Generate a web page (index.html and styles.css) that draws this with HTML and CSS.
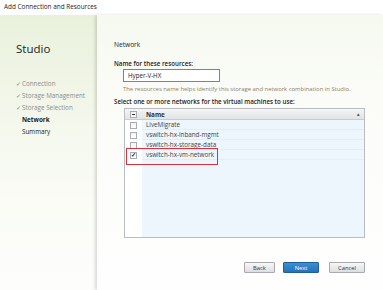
FILE: index.html
```html
<!DOCTYPE html>
<html lang="en">

<head>
    <meta charset="UTF-8">
    <meta name="viewport" content="width=device-width, initial-scale=1.0">
    <title>Add Connection and Resources</title>
    <link rel="stylesheet" href="styles.css">
</head>

<body>
    <div class="window">
        <div class="title-bar">Add Connection and Resources</div>

        <div class="wizard">
            <aside class="sidebar">
                <h1>Studio</h1>
                <ul class="steps">
                    <li class="done"><span class="tick">✓</span>Connection</li>
                    <li class="done"><span class="tick">✓</span>Storage Management</li>
                    <li class="done"><span class="tick">✓</span>Storage Selection</li>
                    <li class="current">Network</li>
                    <li>Summary</li>
                </ul>
            </aside>

            <main class="panel">
                <h2>Network</h2>

                <label class="field-label" for="res-name">Name for these resources:</label>
                <input class="text-input" type="text" id="res-name" value="Hyper-V-HX">
                <p class="hint">The resources name helps identify this storage and network combination in Studio.</p>

                <p class="field-label">Select one or more networks for the virtual machines to use:</p>

                <div class="net-table">
                    <div class="row head">
                        <div class="cell-check"><span class="box minus"></span></div>
                        <div class="cell-name">Name</div>
                        <span class="sort">&#9652;</span>
                    </div>
                    <div class="row">
                        <div class="cell-check"><span class="box"></span></div>
                        <div class="cell-name">LiveMigrate</div>
                    </div>
                    <div class="row">
                        <div class="cell-check"><span class="box"></span></div>
                        <div class="cell-name">vswitch-hx-inband-mgmt</div>
                    </div>
                    <div class="row">
                        <div class="cell-check"><span class="box"></span></div>
                        <div class="cell-name">vswitch-hx-storage-data</div>
                    </div>
                    <div class="row picked">
                        <div class="cell-check"><span class="box checked">✓</span></div>
                        <div class="cell-name">vswitch-hx-vm-network</div>
                        <div class="highlight"></div>
                    </div>
                    <div class="row filler">
                        <div class="cell-check"></div>
                        <div class="cell-name"></div>
                    </div>
                </div>

                <div class="buttons">
                    <button class="btn">Back</button>
                    <button class="btn primary">Next</button>
                    <button class="btn cancel">Cancel</button>
                </div>
            </main>
        </div>
    </div>
</body>

</html>
```

FILE: styles.css
```css
* {
    margin: 0;
    padding: 0;
    box-sizing: border-box;
}

body {
    font-family: 'Open Sans', 'Noto Sans', sans-serif;
    background-color: #ffffff;
    color: #333;
    width: 383px;
    height: 290px;
    overflow: hidden;
}

.window {
    display: flex;
    flex-direction: column;
    height: 290px;
}

.title-bar {
    height: 15px;
    padding: 2px 0 0 4px;
    font-size: 6.4px;
    line-height: 10px;
    color: #222;
    background-color: #ffffff;
}

.wizard {
    flex: 1;
    display: flex;
    background: linear-gradient(to bottom, #e9f1dc 0%, #f3f7eb 35%, #fafcf6 70%, #fdfdfc 100%);
}

.sidebar {
    width: 97px;
    padding: 26px 0 0 16px;
}

.sidebar h1 {
    font-size: 11.5px;
    font-weight: 400;
    line-height: 16px;
    color: #222;
    margin-bottom: 21px;
}

.steps {
    list-style: none;
}

.steps li {
    font-size: 6.3px;
    line-height: 12px;
    color: #222;
    padding-left: 6px;
}

.steps li.done {
    color: #8c8c8c;
    padding-left: 0;
}

.steps li.current {
    font-weight: 700;
}

.tick {
    display: inline-block;
    width: 6px;
    color: #7d8a70;
    font-size: 5.5px;
}

.panel {
    flex: 1;
    display: flex;
    flex-direction: column;
    align-items: flex-start;
    padding: 25px 18px 0 17px;
    background: linear-gradient(to bottom, #f5f9ef 0%, #fbfcf8 30%, #fefefe 100%);
    box-shadow: -2px 0 3px rgba(0, 0, 0, 0.14);
}

.panel h2 {
    font-size: 6.6px;
    font-weight: 400;
    line-height: 10px;
    color: #222;
    margin-bottom: 9px;
}

.field-label {
    display: block;
    font-size: 6.2px;
    font-weight: 600;
    line-height: 10px;
    color: #222;
}

.text-input {
    margin-left: 9px;
    width: 97px;
    height: 13px;
    padding: 0 4px;
    border: 1px solid #4f8fc9;
    background-color: #ffffff;
    font-family: inherit;
    font-size: 6.2px;
    color: #222;
}

.hint {
    margin: 2px 0 3px 9px;
    font-size: 5.9px;
    line-height: 10px;
    color: #8a7d6e;
    white-space: nowrap;
}

.net-table {
    margin: 1px 0 0 10px;
    width: 241px;
    height: 130px;
    border: 1px solid #b9bcc0;
    display: flex;
    flex-direction: column;
    background-color: #ffffff;
}

.row {
    display: flex;
    flex-shrink: 0;
    height: 10px;
    position: relative;
    font-size: 6.3px;
    line-height: 10px;
    color: #444;
}

.row.head {
    height: 11px;
    line-height: 11px;
    background: linear-gradient(to bottom, #f5f5f5, #e2e3e5);
    border-bottom: 1px solid #c9cbce;
    font-weight: 700;
    color: #333;
}

.row.filler {
    flex: 1;
}

.cell-check {
    width: 17px;
    display: flex;
    align-items: center;
    justify-content: center;
    background-color: #ffffff;
}

.row.head .cell-check {
    background: transparent;
}

.cell-name {
    flex: 1;
    padding-left: 4px;
    background-color: #edf5fd;
    border-bottom: 1px solid #e3edf7;
}

.row.head .cell-name {
    background: transparent;
    border-bottom: none;
}

.row.filler .cell-name {
    border-bottom: none;
}

.box {
    width: 7px;
    height: 7px;
    border: 1px solid #a9acb0;
    background: linear-gradient(to bottom, #f2f2f2, #ffffff);
    display: flex;
    align-items: center;
    justify-content: center;
    font-size: 6px;
    line-height: 6px;
    color: #222;
    font-weight: 700;
}

.box.minus::after {
    content: '';
    width: 3px;
    height: 1px;
    background-color: #333;
}

.sort {
    position: absolute;
    right: 4px;
    top: 0;
    font-size: 5px;
    color: #555;
}

.highlight {
    position: absolute;
    z-index: 2;
    left: 1px;
    top: -2px;
    width: 92px;
    height: 17px;
    border: 1.5px solid #d8333d;
}

.buttons {
    align-self: flex-end;
    display: flex;
    gap: 8px;
    margin-top: 24px;
}

.btn {
    height: 11px;
    width: 36px;
    border: 1px solid #a7a9ac;
    border-radius: 1px;
    background: linear-gradient(to bottom, #f7f7f7, #dedfe1);
    font-family: inherit;
    font-size: 5.8px;
    color: #333;
}

.btn:first-child {
    width: 31px;
}

.btn.primary {
    background: linear-gradient(to bottom, #3a8fd3, #2473b8);
    border-color: #1f5f99;
    color: #ffffff;
}

.btn.cancel {
    margin-left: 2px;
}
```
